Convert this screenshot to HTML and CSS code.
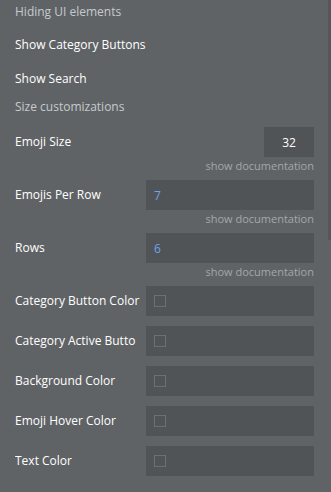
FILE: index.html
```html
<!DOCTYPE html>
<html lang="en">
<head>
    <meta charset="UTF-8">
    <meta name="viewport" content="width=device-width, initial-scale=1.0">
    <title>Emoji picker properties</title>
    <link rel="stylesheet" href="styles.css">
</head>
<body>
    <div class="panel">
        <div class="section-title first">Hiding UI elements</div>
        <div class="toggle-row">Show Category Buttons</div>
        <div class="toggle-row">Show Search</div>
        <div class="section-title">Size customizations</div>

        <div class="field">
            <div class="field-label">Emoji Size</div>
            <div class="field-input small">32</div>
        </div>
        <div class="doc">show documentation</div>

        <div class="field">
            <div class="field-label">Emojis Per Row</div>
            <div class="field-input"><span class="num">7</span></div>
        </div>
        <div class="doc">show documentation</div>

        <div class="field">
            <div class="field-label">Rows</div>
            <div class="field-input"><span class="num">6</span></div>
        </div>
        <div class="doc">show documentation</div>

        <div class="field color">
            <div class="field-label">Category Button Color</div>
            <div class="field-input"><span class="swatch"></span></div>
        </div>
        <div class="field color">
            <div class="field-label">Category Active Button Color</div>
            <div class="field-input"><span class="swatch"></span></div>
        </div>
        <div class="field color">
            <div class="field-label">Background Color</div>
            <div class="field-input"><span class="swatch"></span></div>
        </div>
        <div class="field color">
            <div class="field-label">Emoji Hover Color</div>
            <div class="field-input"><span class="swatch"></span></div>
        </div>
        <div class="field color">
            <div class="field-label">Text Color</div>
            <div class="field-input"><span class="swatch"></span></div>
        </div>
    </div>
    <div class="scrollbar"></div>
</body>
</html>
```
FILE: styles.css
```css
body {
  margin: 0;
  background-color: #5f6366;
  font-family: "Open Sans", "Liberation Sans", sans-serif;
  font-size: 12px;
  color: #ffffff;
  overflow: hidden;
}
.panel {
  padding: 0 17px 0 15px;
}
.section-title {
  color: #c6cacd;
  height: 22px;
  line-height: 22px;
}
.section-title.first {
  height: 24px;
  line-height: 24px;
  margin-bottom: 4px;
}
.toggle-row {
  height: 34px;
  line-height: 34px;
}
.field {
  display: flex;
  align-items: center;
  height: 30px;
}
.section-title + .field {
  margin-top: 9px;
}
.field.color {
  margin-bottom: 10px;
}
.field-label {
  width: 125px;
  margin-right: 6px;
  flex-shrink: 0;
  height: 30px;
  line-height: 30px;
  overflow: hidden;
  word-break: break-all;
}
.field-input {
  flex: 1;
  height: 30px;
  background-color: #505457;
  display: flex;
  align-items: center;
  padding-left: 8px;
}
.field-input.small {
  flex: none;
  width: 50px;
  margin-left: auto;
  padding-left: 0;
  justify-content: center;
}
.num {
  color: #6fa3ea;
}
.swatch {
  width: 10px;
  height: 10px;
  border: 1px solid #6c7073;
}
.doc {
  text-align: right;
  color: #a3a7aa;
  font-size: 11px;
  height: 18px;
  line-height: 18px;
  margin-bottom: 5px;
}
.scrollbar {
  position: fixed;
  top: 0;
  right: 0;
  width: 3px;
  height: 240px;
  background-color: #54585b;
}
```
